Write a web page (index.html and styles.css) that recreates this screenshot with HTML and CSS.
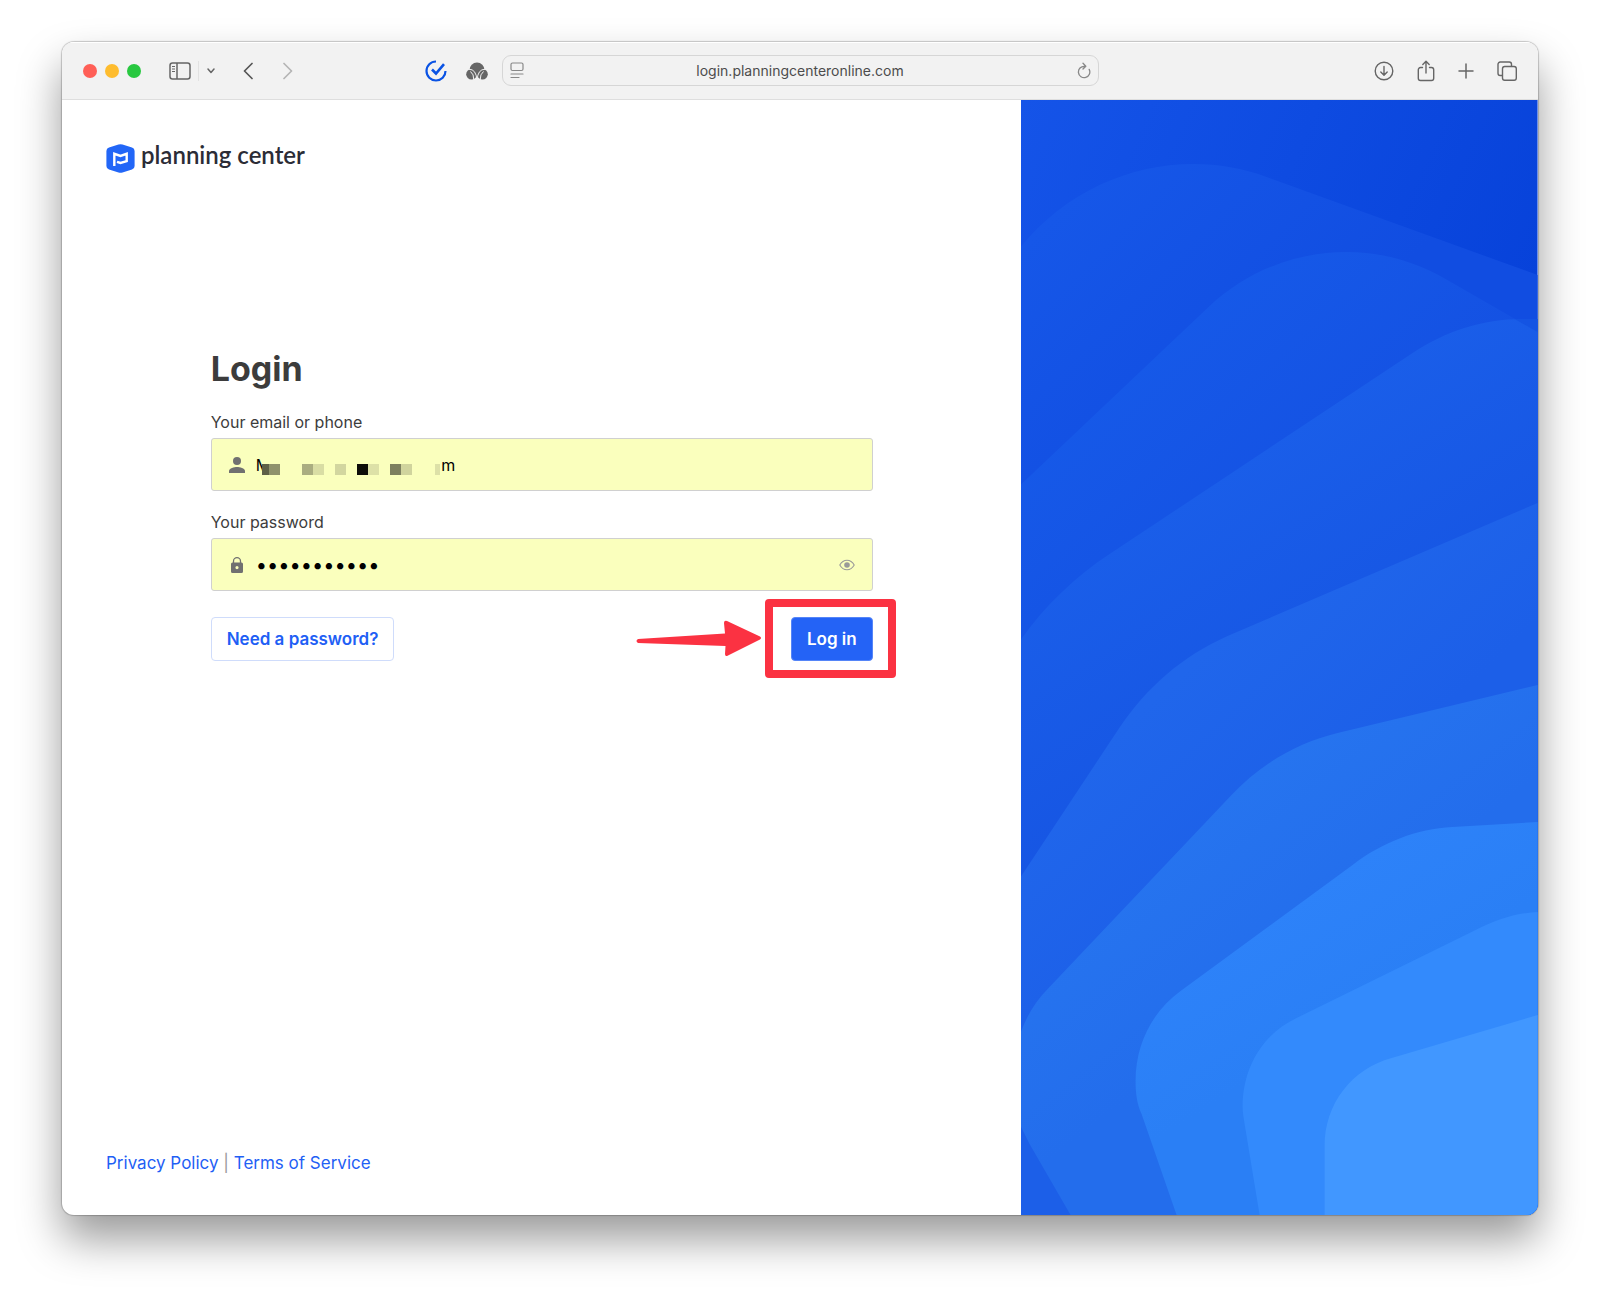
FILE: index.html
```
<!DOCTYPE html>
<html lang="en">
<head>
<meta charset="UTF-8">
<meta name="viewport" content="width=device-width, initial-scale=1.0">
<title>Planning Center Login</title>
<link rel="stylesheet" href="styles.css">
</head>
<body>

<div class="window">
    <!-- Browser toolbar -->
    <header class="toolbar">
        <div class="toolbar-left">
            <div class="lights">
                <span class="light red"></span>
                <span class="light yellow"></span>
                <span class="light green"></span>
            </div>
            <button type="button" class="icon-btn sidebar-btn" aria-label="Sidebar">
                <svg width="22" height="18" viewBox="0 0 22 18" fill="none" stroke="#666" stroke-width="1.5"><rect x="1" y="1" width="20" height="16" rx="2.5"/><path d="M8 1v16"/><path d="M3 4.5h3M3 7h3M3 9.5h3" stroke-width="1"/></svg>
            </button>
            <button type="button" class="icon-btn menu-btn" aria-label="Tab groups">
                <svg width="10" height="6" viewBox="0 0 10 6" fill="none" stroke="#666" stroke-width="1.5" stroke-linecap="round" stroke-linejoin="round"><path d="M2 1l3 3.5L8 1"/></svg>
            </button>
            <button type="button" class="icon-btn back-btn" aria-label="Back">
                <svg width="10" height="18" viewBox="0 0 10 18" fill="none" stroke="#555" stroke-width="1.7" stroke-linecap="round" stroke-linejoin="round"><path d="M9 1.5L1.5 9 9 16.5"/></svg>
            </button>
            <button type="button" class="icon-btn forward-btn" aria-label="Forward">
                <svg width="10" height="18" viewBox="0 0 10 18" fill="none" stroke="#b4b4b4" stroke-width="1.7" stroke-linecap="round" stroke-linejoin="round"><path d="M1 1.5L8.5 9 1 16.5"/></svg>
            </button>
            <div class="extensions">
                <button type="button" class="icon-btn" aria-label="Tasks">
                    <svg width="22" height="22" viewBox="0 0 22 22" fill="none" stroke="#0a53e4" stroke-width="2.2"><path d="M11 1.5A9.5 9.5 0 1 0 20.5 11"/><path d="M7 9.5l4 4L19 4.2" stroke-width="2.6"/></svg>
                </button>
                <button type="button" class="icon-btn" aria-label="Extension">
                    <svg width="22" height="18" viewBox="0 0 22 18"><g fill="#666"><circle cx="11" cy="8" r="7.5"/><circle cx="5.5" cy="12.3" r="5.3"/><circle cx="16.5" cy="12.3" r="5.3"/></g><path d="M3 7.3Q10 7 11 18Q12 7 19 7.3M4.500 9.500Q8 12 7.800 18M17.500 9.500Q14 12 14.200 18" fill="none" stroke="#f2f2f2" stroke-width="1"/></svg>
                </button>
            </div>
        </div>

        <div class="address">
            <svg width="14" height="18" viewBox="0 0 14 18" fill="none" stroke="#888" stroke-width="1.2" stroke-linecap="round"><rect x="1" y="1" width="12" height="7.5" rx="1.5"/><path d="M1 12h12M1 15.5h8"/></svg>
            <input type="text" aria-label="Address" value="login.planningcenteronline.com">
            <button type="button" class="icon-btn" aria-label="Reload">
                <svg width="14" height="17" viewBox="0 0 14 17" fill="none" stroke="#888" stroke-width="1.3" stroke-linecap="round" stroke-linejoin="round"><path d="M12.2 7.4A5.7 5.7 0 1 1 7.5 4.3M6 1.2l2.8 3L6 7"/></svg>
            </button>
        </div>

        <div class="toolbar-right">
            <button type="button" class="icon-btn" aria-label="Downloads">
                <svg width="20" height="20" viewBox="0 0 20 20" fill="none" stroke="#666" stroke-width="1.4" stroke-linecap="round" stroke-linejoin="round"><circle cx="10" cy="10" r="8.8"/><path d="M10 5.5V14M6.8 11l3.2 3.2 3.2-3.2"/></svg>
            </button>
            <button type="button" class="icon-btn" aria-label="Share">
                <svg width="18" height="22" viewBox="0 0 18 22" fill="none" stroke="#666" stroke-width="1.4" stroke-linecap="round" stroke-linejoin="round"><path d="M5.5 7.5h-2a2.2 2.2 0 0 0-2.2 2.2v8.6a2.2 2.2 0 0 0 2.2 2.2h11a2.2 2.2 0 0 0 2.2-2.2V9.7a2.2 2.2 0 0 0-2.2-2.2h-2M9 13V1.5M5.8 4.5L9 1.3l3.2 3.2"/></svg>
            </button>
            <button type="button" class="icon-btn" aria-label="New tab">
                <svg width="16" height="16" viewBox="0 0 16 16" fill="none" stroke="#666" stroke-width="1.5" stroke-linecap="round"><path d="M8 1v14M1 8h14"/></svg>
            </button>
            <button type="button" class="icon-btn" aria-label="Tab overview">
                <svg width="20" height="20" viewBox="0 0 20 20" fill="none" stroke="#666" stroke-width="1.4"><path d="M5.5 14.5H3.2A2.2 2.2 0 0 1 1 12.3V3.2A2.2 2.2 0 0 1 3.2 1h9.1a2.2 2.2 0 0 1 2.2 2.2v2.3"/><rect x="5.5" y="5.5" width="13.8" height="13.8" rx="2.2"/></svg>
            </button>
        </div>
    </header>

    <div class="page">
        <main class="content">
            <a href="#" class="logo">
                <svg width="29" height="29" viewBox="0 0 29 29"><path d="M12.5.6Q14.5 0 16.5.6L26 3.4Q28.6 4.2 28.6 7V22Q28.6 24.8 26 25.6L16.5 28.4Q14.5 29 12.5 28.4L3 25.6Q.4 24.8 .4 22V7Q.4 4.2 3 3.4Z" fill="#2266f7"/><path d="M8.3 22V9.8L14.5 12 20.7 9.8V17.2L14.5 19 11 17.8" fill="none" stroke="#fff" stroke-width="2.4"/></svg>
                <span>planning center</span>
            </a>

            <form class="login">
                <h1>Login</h1>

                <label for="email">Your email or phone</label>
                <div class="field">
                    <svg class="field-icon" width="16" height="16" viewBox="0 0 16 16" fill="#707070"><circle cx="8" cy="4" r="4"/><path d="M0 16v-2c0-2.7 5.3-4 8-4s8 1.3 8 4v2z"/></svg>
                    <input type="text" id="email" value="M&nbsp;&nbsp;&nbsp;&nbsp;&nbsp;&nbsp;&nbsp;&nbsp;&nbsp;&nbsp;&nbsp;&nbsp;&nbsp;&nbsp;&nbsp;&nbsp;&nbsp;&nbsp;&nbsp;&nbsp;&nbsp;&nbsp;&nbsp;&nbsp;&nbsp;&nbsp;&nbsp;&nbsp;&nbsp;&nbsp;&nbsp;&nbsp;&nbsp;&nbsp;&nbsp;&nbsp;&nbsp;&nbsp;m">
                    <!-- hides the middle of the address -->
                    <svg class="mosaic" width="178" height="24" viewBox="0 0 178 24"><path fill="#faffbd" d="M0 0h178v24H0z"/><path fill="#5e6047" d="M0 10h7v11H0z"/><path fill="#8f926c" d="M7 10h11v11H7z"/><path fill="#aaad80" d="M40 10h11v11H40z"/><path fill="#d9dda4" d="M51 10h11v11H51z"/><path fill="#d2d69f" d="M73 10h11v11H73z"/><path fill="#0d0d09" d="M95 10h11v11H95z"/><path fill="#dde1a7" d="M106 10h11v11h-11z"/><path fill="#7d805f" d="M128 10h11v11h-11z"/><path fill="#d0d49d" d="M139 10h11v11h-11z"/><path fill="#dde1a7" d="M173 10h5v11h-5z"/></svg>
                </div>

                <label for="password">Your password</label>
                <div class="field">
                    <svg class="field-icon" width="16" height="16" viewBox="0 0 16 16"><path d="M4.5 6V4.2a3.5 3.5 0 0 1 7 0V6" fill="none" stroke="#707070" stroke-width="1.3"/><path fill="#707070" fill-rule="evenodd" d="M3.5 5.5h9A1.5 1.5 0 0 1 14 7v7.5a1.5 1.5 0 0 1-1.5 1.5h-9A1.5 1.5 0 0 1 2 14.5V7a1.5 1.5 0 0 1 1.5-1.5zM8 9a1.6 1.6 0 1 0 0 3.2A1.6 1.6 0 0 0 8 9z"/></svg>
                    <input type="password" id="password" value="secretword1">
                    <button type="button" class="icon-btn" aria-label="Show password">
                        <svg width="16" height="12" viewBox="0 0 16 12"><path d="M.8 6Q3.5 1.2 8 1.2T15.2 6Q12.5 10.8 8 10.8T.8 6Z" fill="none" stroke="#999" stroke-width="1.1"/><circle cx="8" cy="6" r="2.8" fill="#999"/></svg>
                    </button>
                </div>

                <div class="actions">
                    <button type="button" class="btn btn-outline">Need a password?</button>
                    <div class="highlight">
                        <button type="submit" class="btn btn-primary">Log in</button>
                        <svg class="arrow" width="126" height="40" viewBox="0 0 126 40"><path d="M2 20L89 14.5 88 4Q88 1 91 2L124 17.5Q126 19 124 20.5L92 36.5Q89 38 89 35L89.5 27 2 24Q-1 22 2 20Z" fill="#fb3242"/></svg>
                    </div>
                </div>
            </form>

            <footer class="links">
                <a href="#">Privacy Policy</a> | <a href="#">Terms of Service</a>
            </footer>
        </main>

        <aside class="art">
            <svg viewBox="0 0 517 1115" preserveAspectRatio="xMaxYMax slice">
                <defs>
                    <linearGradient id="g0" gradientUnits="userSpaceOnUse" x1="0" y1="0" x2="500" y2="220"><stop offset="0" stop-color="#1554e8"/><stop offset="1" stop-color="#0742da"/></linearGradient>
                    <linearGradient id="g1" gradientUnits="userSpaceOnUse" x1="60" y1="90" x2="260" y2="290"><stop offset="0" stop-color="#1657e8"/><stop offset="1" stop-color="#114de1"/></linearGradient>
                    <linearGradient id="g2" gradientUnits="userSpaceOnUse" x1="150" y1="230" x2="330" y2="430"><stop offset="0" stop-color="#1659e8"/><stop offset="1" stop-color="#1450e2"/></linearGradient>
                    <linearGradient id="g3" gradientUnits="userSpaceOnUse" x1="230" y1="350" x2="370" y2="560"><stop offset="0" stop-color="#1a5ee9"/><stop offset="1" stop-color="#1655e3"/></linearGradient>
                    <linearGradient id="g4" gradientUnits="userSpaceOnUse" x1="100" y1="630" x2="240" y2="780"><stop offset="0" stop-color="#2066eb"/><stop offset="1" stop-color="#1c5fe8"/></linearGradient>
                    <linearGradient id="g5" gradientUnits="userSpaceOnUse" x1="200" y1="700" x2="310" y2="840"><stop offset="0" stop-color="#2674ef"/><stop offset="1" stop-color="#236dec"/></linearGradient>
                    <linearGradient id="g6" gradientUnits="userSpaceOnUse" x1="240" y1="820" x2="310" y2="930"><stop offset="0" stop-color="#2d82f9"/><stop offset="1" stop-color="#2a7ff5"/></linearGradient>
                </defs>
                <path fill="url(#g0)" d="M0 0H517V1115H0Z"/>
                <path fill="url(#g1)" d="M0 147C44 93 108 64 173 64C198 64 222 68 246 77L517 175V1115H0Z"/>
                <path fill="url(#g2)" d="M0 385L189 206C227 171 275 152 326 152C360 152 394 161 425 179L517 232V1115H0Z"/>
                <path fill="url(#g3)" d="M0 540C24 506 54 477 89 454L392 253C425 231 463 219 501 219H517V1115H0Z"/>
                <path fill="#1454e3" d="M494 219H517V232Z"/>
                <path fill="url(#g4)" d="M0 777L98 629C126 587 162 556 207 536L517 403V1115H0Z"/>
                <path fill="url(#g5)" d="M0 933C6 916 15 901 28 888L210 696C240 664 276 643 317 633L517 585V1115H50L9 1044L0 1026Z"/>
                <path fill="url(#g6)" d="M156 1115L121 1014C116 1003 115 992 115 981C115 945 131 912 160 891L332 765C362 742 396 729 432 727L517 722V1115Z"/>
                <path fill="#338afc" d="M239 1115L224 1024C223 1018 222 1012 222 1007C222 968 242 934 276 918L453 831C474 820 495 813 517 812V1115Z"/>
                <path fill="#4197ff" d="M304 1115V1046C304 1004 331 969 371 958L517 915V1115Z"/>
            </svg>
        </aside>
    </div>
</div>

</body>
</html>
```
FILE: styles.css
```
* {
    box-sizing: border-box;
}

body {
    font-family: Inter, "Liberation Sans", sans-serif;
    margin: 0;
    padding: 42px 62px 82px;
    min-height: 100vh;
    display: flex;
    background-color: #fff;
    color: #3c3c3c;
}

.window {
    flex: 1;
    display: flex;
    flex-direction: column;
    border-radius: 12px;
    overflow: hidden;
    background-color: #fff;
    box-shadow: 0 0 1px 1px rgba(0, 0, 0, 0.2), 0 24px 44px rgba(0, 0, 0, 0.4);
}

.toolbar {
    display: grid;
    grid-template-columns: 1fr 597px 1fr;
    align-items: center;
    gap: 14px;
    height: 58px;
    padding: 0 21px;
    background-color: #f2f2f2;
    border-bottom: 1px solid #dedede;
    box-shadow: inset 0 1px #fff;
}

.toolbar-left,
.toolbar-right,
.lights,
.extensions {
    display: flex;
    align-items: center;
}

.toolbar-right {
    justify-content: flex-end;
    gap: 23px;
}

.lights {
    gap: 8px;
    margin-right: 28px;
}

.light {
    width: 14px;
    height: 14px;
    border-radius: 50%;
}

.red {
    background-color: #ff5f57;
}

.yellow {
    background-color: #febc2e;
}

.green {
    background-color: #28c840;
}

.icon-btn {
    display: flex;
    padding: 0;
    border: none;
    background: none;
    cursor: pointer;
}

.menu-btn {
    margin-left: 7px;
    padding: 7px 0 7px 7px;
    border-left: 1px solid #e2e2e2;
}

.back-btn {
    margin-left: 27px;
}

.forward-btn {
    margin-left: 30px;
}

.extensions {
    margin-left: auto;
    gap: 19px;
}

.address {
    display: flex;
    align-items: center;
    height: 31px;
    padding: 0 7px;
    border: 1px solid #d6d6d6;
    border-radius: 9px;
}

.address input {
    flex: 1;
    min-width: 0;
    border: none;
    background: none;
    font: 14px/20px Inter, sans-serif;
    color: #4c4c4c;
    text-align: center;
}

.page {
    flex: 1;
    display: grid;
    grid-template-columns: 65% 35%;
}

.content {
    display: flex;
    flex-direction: column;
    padding: 40px 44px;
}

.logo {
    display: flex;
    align-items: center;
    gap: 6px;
    font: 600 24px/30px Lato, sans-serif;
    color: #2b2c36;
    text-decoration: none;
}

.logo span {
    padding-bottom: 6px;
}

.login {
    width: 100%;
    max-width: 662px;
    margin: 173px auto 40px;
}

h1 {
    margin: 0 0 23px;
    font-size: 34px;
    line-height: 40px;
}

label {
    display: block;
    margin-bottom: 6px;
    font-size: 16px;
    line-height: 20px;
}

.field {
    position: relative;
    display: flex;
    align-items: center;
    gap: 11px;
    height: 53px;
    margin-bottom: 21px;
    padding: 0 17px;
    border: 1px solid #d0d0d0;
    border-radius: 3px;
    background-color: #faffbd;
}

.field input {
    flex: 1;
    min-width: 0;
    padding: 0;
    border: none;
    background: none;
    font: 16px/24px Inter, sans-serif;
    color: #000;
}

.field input[type="password"] {
    font-size: 20px;
}

.mosaic {
    position: absolute;
    left: 50px;
    top: 15px;
}

.actions {
    display: flex;
    justify-content: space-between;
    padding-top: 5px;
}

.btn {
    height: 44px;
    padding: 0 15px;
    border-radius: 4px;
    font: 600 17px/20px Inter, sans-serif;
    cursor: pointer;
}

.btn-outline {
    border: 1px solid #cfdcfb;
    background-color: #fff;
    color: #1f5ff5;
}

.btn-primary {
    border: 1px solid #5585f8;
    background-color: #2463f6;
    color: #fff;
}

/* red frame and arrow around the login button */
.highlight {
    position: relative;
}

.highlight::after {
    content: "";
    position: absolute;
    inset: -18px -23px -17px -26px;
    border: 8px solid #fb3242;
    border-radius: 4px;
    pointer-events: none;
}

.arrow {
    position: absolute;
    right: 111px;
    top: 2px;
}

.links {
    margin-top: auto;
    font-size: 17px;
    line-height: 24px;
    color: #999;
}

.links a {
    color: #1f5ff5;
    text-decoration: none;
}

.art {
    position: relative;
    overflow: hidden;
}

.art svg {
    position: absolute;
    inset: 0;
    width: 100%;
    height: 100%;
}
```
